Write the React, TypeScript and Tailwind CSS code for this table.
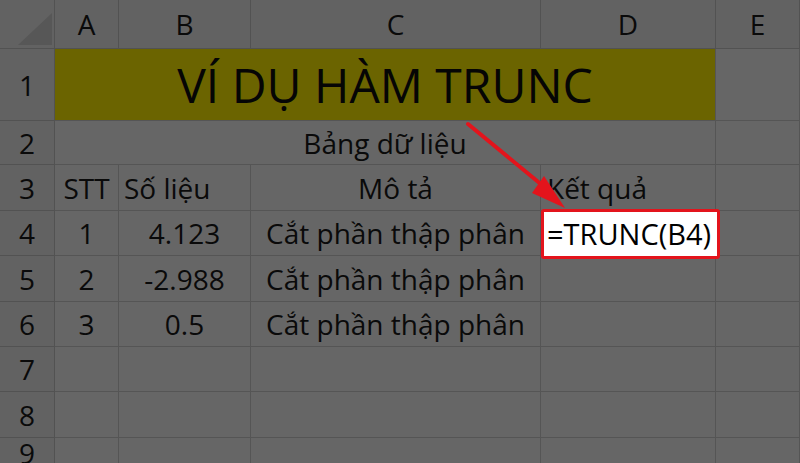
import React from "react";

const font = { fontFamily: '"Open Sans", "Noto Sans", sans-serif' };

export default function App() {
  const cell = "border-r border-b border-[#555555] flex items-center";
  const hdr = "border-r border-b border-[#525252] bg-[#626262] flex items-center justify-center text-[28px] text-[#0a0a0a]";
  const rowHdr = "border-r border-b border-[#525252] bg-[#626262] flex items-center justify-center text-[28px] text-[#0a0a0a]";
  const txt = "text-[28px] text-[#0a0a0a] whitespace-nowrap";
  return (
    <div className="relative w-[800px] h-[463px] overflow-hidden bg-[#666666]" style={font}>
      <div className="grid grid-cols-[55px_64px_132px_290px_175px_84px] grid-rows-[49px_72px_44px_46px_45px_46px_45px_45px_46px_30px]">
        {/* header row */}
        <div className={`${hdr} relative`}>
          <svg className="absolute left-0 top-0" width="55" height="49" viewBox="0 0 55 49">
            <polygon points="18,45 52,13 52,45" fill="#575757" />
          </svg>
        </div>
        <div className={hdr}>A</div>
        <div className={hdr}>B</div>
        <div className={hdr}>C</div>
        <div className={hdr}>D</div>
        <div className={hdr}>E</div>

        {/* row 1 */}
        <div className={rowHdr}>1</div>
        <div className={`col-span-4 ${cell} justify-center bg-[#6b6400]`}>
          <span className="text-[48px] text-[#050505] whitespace-nowrap">VÍ DỤ HÀM TRUNC</span>
        </div>
        <div className={cell}></div>

        {/* row 2 */}
        <div className={rowHdr}>2</div>
        <div className={`col-span-4 ${cell} justify-center`}>
          <span className={txt}>Bảng dữ liệu</span>
        </div>
        <div className={cell}></div>

        {/* row 3 */}
        <div className={rowHdr}>3</div>
        <div className={`${cell} justify-center`}><span className={txt}>STT</span></div>
        <div className={`${cell} pl-[5px]`}><span className={txt}>Số liệu</span></div>
        <div className={`${cell} justify-center`}><span className={txt}>Mô tả</span></div>
        <div className={`${cell} pl-[6px]`}><span className={txt}>Kết quả</span></div>
        <div className={cell}></div>

        {/* row 4 */}
        <div className={rowHdr}>4</div>
        <div className={`${cell} justify-center`}><span className={txt}>1</span></div>
        <div className={`${cell} justify-center`}><span className={txt}>4.123</span></div>
        <div className={`${cell} justify-center`}><span className={txt}>Cắt phần thập phân</span></div>
        <div className={`${cell} relative`}>
          <div className="absolute left-0 top-[-2px] w-[179px] h-[50px] border-[3px] border-[#e3141c] rounded-[3px] bg-white flex items-center pl-[3px]">
            <span className="text-[29px] text-black whitespace-nowrap">=TRUNC(B4)</span>
          </div>
        </div>
        <div className={cell}></div>

        {/* row 5 */}
        <div className={rowHdr}>5</div>
        <div className={`${cell} justify-center`}><span className={txt}>2</span></div>
        <div className={`${cell} justify-center`}><span className={txt}>-2.988</span></div>
        <div className={`${cell} justify-center`}><span className={txt}>Cắt phần thập phân</span></div>
        <div className={cell}></div>
        <div className={cell}></div>

        {/* row 6 */}
        <div className={rowHdr}>6</div>
        <div className={`${cell} justify-center`}><span className={txt}>3</span></div>
        <div className={`${cell} justify-center`}><span className={txt}>0.5</span></div>
        <div className={`${cell} justify-center`}><span className={txt}>Cắt phần thập phân</span></div>
        <div className={cell}></div>
        <div className={cell}></div>

        {/* rows 7-9 */}
        {["7", "8", "9"].map((n) => (
          <React.Fragment key={n}>
            <div className={rowHdr}>{n}</div>
            <div className={cell}></div>
            <div className={cell}></div>
            <div className={cell}></div>
            <div className={cell}></div>
            <div className={cell}></div>
          </React.Fragment>
        ))}
      </div>

      {/* red arrow */}
      <svg className="absolute left-0 top-0 pointer-events-none" width="800" height="463" viewBox="0 0 800 463">
        <line x1="468" y1="124" x2="548" y2="190" stroke="#e3141c" strokeWidth="4" strokeLinecap="round" />
        <polygon points="565,208 532,193 544,176" fill="#e3141c" />
      </svg>
    </div>
  );
}
